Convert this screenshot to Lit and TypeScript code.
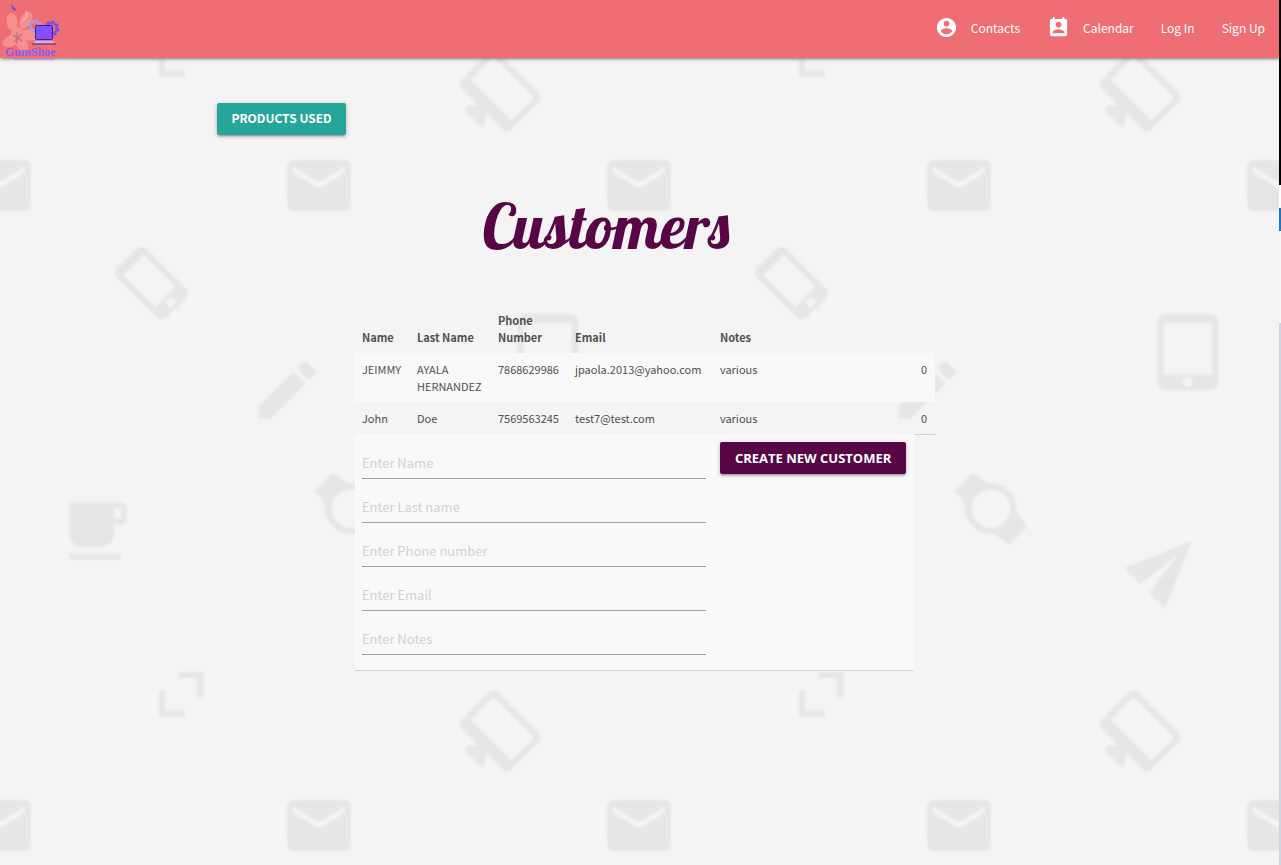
import { LitElement, html, css, svg, unsafeCSS } from "lit";
import { customElement } from "lit/decorators.js";

const mail =
  "M20 4H4c-1.1 0-1.99.9-1.99 2L2 18c0 1.1.9 2 2 2h16c1.1 0 2-.9 2-2V6c0-1.1-.9-2-2-2zm0 4l-8 5-8-5V6l8 5 8-5v2z";
const phone =
  "M15.5 1h-8C6.12 1 5 2.12 5 3.5v17C5 21.88 6.12 23 7.5 23h8c1.38 0 2.5-1.12 2.5-2.5v-17C18 2.12 16.88 1 15.5 1zm-4 21c-.83 0-1.5-.67-1.5-1.5s.67-1.5 1.5-1.5 1.5.67 1.5 1.5-.67 1.5-1.5 1.5zm4.5-4H7V4h9v14z";
const pencil =
  "M3 17.25V21h3.75L17.81 9.94l-3.75-3.75L3 17.25zM20.71 7.04c.39-.39.39-1.02 0-1.41l-2.34-2.34c-.39-.39-1.02-.39-1.41 0l-1.83 1.83 3.75 3.75 1.83-1.83z";
const tablet =
  "M18.5 0h-14C3.12 0 2 1.12 2 2.5v19C2 22.88 3.12 24 4.5 24h14c1.38 0 2.5-1.12 2.5-2.5v-19C21 1.12 19.88 0 18.5 0zm-7 23c-.83 0-1.5-.67-1.5-1.5s.67-1.5 1.5-1.5 1.5.67 1.5 1.5-.67 1.5-1.5 1.5zm7.5-4H4V3h15v16z";
const cup =
  "M20 3H4v10c0 2.21 1.79 4 4 4h6c2.21 0 4-1.79 4-4v-3h2c1.11 0 2-.89 2-2V5c0-1.11-.89-2-2-2zm0 5h-2V5h2v3zM4 21h16v-2H4v2z";
const watch =
  "M20 12c0-2.54-1.19-4.81-3.04-6.27L16 0H8l-.95 5.73C5.19 7.19 4 9.45 4 12s1.19 4.81 3.05 6.27L8 24h8l.96-5.73C18.81 16.81 20 14.54 20 12zM6 12c0-3.31 2.69-6 6-6s6 2.69 6 6-2.69 6-6 6-6-2.69-6-6z";
const plane = "M2.01 21L23 12 2.01 3 2 10l15 2-15 2z";
const desktop =
  "M21 2H3c-1.1 0-2 .9-2 2v12c0 1.1.9 2 2 2h7l-2 3v1h8v-1l-2-3h7c1.1 0 2-.9 2-2V4c0-1.1-.9-2-2-2zm0 12H3V4h18v10z";
const corners = "M11 5h8v8h-2V7h-6zM5 11h2v6h6v2H5z";

// Each mark is a 24-unit glyph drawn at 3.2x around its centre.
const mark = (d: string, x: number, y: number, turn = 0) =>
  `<path transform="translate(${x} ${y}) rotate(${turn}) scale(3.2) translate(-12 -12)" d="${d}"/>`;

const tile = `<svg xmlns="http://www.w3.org/2000/svg" width="640" height="640"><filter id="s"><feGaussianBlur stdDeviation="0.8"/></filter><g fill="#e6e6e6" filter="url(#s)">${[
  mark(mail, 319, 185.6),
  mark(mail, 639, 185.6),
  mark(mail, -1, 185.6),
  mark(phone, 152.8, 282, -45),
  mark(pencil, 287.2, 390.2),
  mark(tablet, 549.4, 352),
  mark(cup, 95, 531),
  mark(watch, 351, 508.6, -45),
  mark(plane, 527, 566, -45),
  mark(desktop, 495.5, 95.5, 45),
  mark(corners, 181.3, 54.3),
].join("")}</g></svg>`;

const tileUrl = unsafeCSS(`url("data:image/svg+xml,${encodeURIComponent(tile)}")`);

const customers = [
  ["JEIMMY", "AYALA HERNANDEZ", "7868629986", "jpaola.2013@yahoo.com", "various", "0"],
  ["John", "Doe", "7569563245", "test7@test.com", "various", "0"],
];

const fields = [
  { name: "name", label: "Enter Name", type: "text" },
  { name: "lastName", label: "Enter Last name", type: "text" },
  { name: "phone", label: "Enter Phone number", type: "tel" },
  { name: "email", label: "Enter Email", type: "email" },
  { name: "notes", label: "Enter Notes", type: "text" },
];

const petal = (cx: number, cy: number, turn: number) =>
  svg`<ellipse cx=${cx} cy=${cy} rx="5.5" ry="9" transform="rotate(${turn} ${cx} ${cy})" fill="#f68f90"/>`;

@customElement("app-root")
export class AppRoot extends LitElement {
  static styles = css`
    :host {
      display: flex;
      min-height: 100vh;
      font-family: "Noto Sans CJK SC", "Noto Sans", sans-serif;
      font-size: 11px;
      line-height: 17px;
      color: #505050;
    }
    .page {
      flex: 1;
      min-width: 0;
      background: #f4f4f4 ${tileUrl};
    }
    .edge {
      flex: none;
      width: 2px;
      background: linear-gradient(
        #000 185px, #fff 185px, #fff 208px, #1c78c4 208px, #1c78c4 231px,
        #f5f7f9 231px, #f5f7f9 323px, #cbd5e5 323px
      );
    }
    .bar {
      display: flex;
      justify-content: space-between;
      height: 58px;
      background: #ee6e73;
      box-shadow: 0 2px 2px 0 rgba(0, 0, 0, 0.14), 0 3px 1px -2px rgba(0, 0, 0, 0.12),
        0 1px 5px 0 rgba(0, 0, 0, 0.2);
    }
    .logo {
      display: block;
      width: 64px;
      height: 62px;
    }
    .wordmark {
      font: bold 12px "Liberation Serif", serif;
      fill: #8a5cf0;
    }
    .links {
      display: flex;
      align-items: center;
      gap: 27px;
      margin: 0;
      padding: 0 14px 4px 0;
      list-style: none;
    }
    .link {
      display: flex;
      align-items: center;
      gap: 13px;
      color: #fff;
      font-size: 12px;
      text-decoration: none;
    }
    .icon {
      width: 23px;
      height: 23px;
      fill: #fff;
    }
    .actions {
      padding: 45px 17% 0;
    }
    .btn {
      height: 32px;
      padding: 0 14px 2px;
      border: 0;
      border-radius: 2px;
      color: #fff;
      background: #26a69a;
      font: bold 12px/30px "Noto Sans CJK SC", "Noto Sans", sans-serif;
      text-transform: uppercase;
      white-space: nowrap;
      cursor: pointer;
      box-shadow: 0 2px 2px 0 rgba(0, 0, 0, 0.14), 0 3px 1px -2px rgba(0, 0, 0, 0.12),
        0 1px 5px 0 rgba(0, 0, 0, 0.2);
    }
    .btn.create {
      padding: 0 15px;
      background: #570544;
      font: bold 13px/32px "Open Sans", sans-serif;
    }
    .content {
      padding: 0 33% 24px 27.75%;
    }
    .title {
      margin: 55px 0 42px;
      font: 63px/72px Lobster, "Liberation Serif", serif;
      text-align: center;
      color: #570544;
    }
    .list {
      width: 580px;
      table-layout: fixed;
      border-collapse: collapse;
    }
    .c1 { width: 55px; }
    .c2 { width: 81px; }
    .c3 { width: 77px; }
    .c4 { width: 145px; }
    .c5 { width: 201px; }
    .c6 { width: 21px; }
    th,
    td {
      padding: 8px 7px 7px;
      text-align: left;
      vertical-align: top;
    }
    th {
      vertical-align: bottom;
    }
    tbody tr:nth-child(odd) td {
      background: #f9f9f9;
    }
    tbody tr:nth-child(2) td:last-child,
    tbody tr:last-child td {
      box-shadow: 0 1px #d3d3d3;
    }
    .form {
      display: grid;
      gap: 13px;
      padding: 6px 0 8px;
    }
    .field {
      width: 100%;
      height: 31px;
      box-sizing: border-box;
      padding: 0 0 1px;
      border: 0;
      border-bottom: 1px solid #9e9e9e;
      border-radius: 0;
      outline: 0;
      background: transparent;
      color: #505050;
      font: 13px "Noto Sans CJK SC", "Noto Sans", sans-serif;
    }
    .field::placeholder {
      color: #d1d1d1;
      opacity: 1;
    }
  `;

  private logo() {
    return svg`
      <svg class="logo" viewBox="0 0 64 62" role="img" aria-label="GumShoe">
        <g>
          ${petal(12, 22, -8)}${petal(26, 20, 28)}${petal(11, 41, 68)}
          ${petal(29, 35, 100)}${petal(22, 44, 150)}
        </g>
        <circle cx="18" cy="34" r="7" fill="#f68f90" />
        <path d="M17 32v12M13 35l9 6M22 34l-8 8" stroke="#c87580" stroke-width="1.6" fill="none" />
        <path d="M26 11q3 5-3 9" stroke="#fbc3bf" stroke-width="1.2" fill="none" />
        <path d="M11 4l5 5-1 2-3-2z" fill="#8348cf" />
        <circle cx="35" cy="26" r="4.5" fill="none" stroke="#b493dc" stroke-width="2.4" />
        <circle cx="35" cy="26" r="6" fill="none" stroke="#b493dc" stroke-width="1.6" stroke-dasharray="2.4 2.3" />
        <circle cx="51.5" cy="28.5" r="5.5" fill="none" stroke="#7c4df0" stroke-width="2.6" />
        <circle cx="51.5" cy="28.5" r="7.2" fill="none" stroke="#7c4df0" stroke-width="1.8" stroke-dasharray="2.9 2.75" />
        <rect x="35.5" y="25.5" width="17" height="14" rx="1" fill="#8450ff" stroke="#40208a" />
        <path d="M35 41h18l2 2.5H33z" fill="#c9b4f5" />
        <path d="M32 44h24" stroke="#40208a" stroke-width="1" />
        <text class="wordmark" x="5" y="56">GumShoe</text>
        <path d="M14 59h40" stroke="#b284d8" stroke-width="1.4" stroke-dasharray="2 .6 4 .6 3 .8" />
      </svg>`;
  }

  render() {
    return html`
      <div class="page">
        <header>
          <nav class="bar">
            <a href="#home">${this.logo()}</a>
            <ul class="links">
              <li>
                <a class="link" href="#contacts">
                  <svg class="icon" viewBox="0 0 24 24" aria-hidden="true">
                    <path d="M12 2C6.48 2 2 6.48 2 12s4.48 10 10 10 10-4.48 10-10S17.52 2 12 2zm0 3c1.66 0 3 1.34 3 3s-1.34 3-3 3-3-1.34-3-3 1.34-3 3-3zm0 14.2c-2.5 0-4.71-1.28-6-3.22.03-1.99 4-3.08 6-3.08 1.99 0 5.97 1.09 6 3.08-1.29 1.94-3.5 3.22-6 3.22z" />
                  </svg>
                  Contacts
                </a>
              </li>
              <li>
                <a class="link" href="#calendar">
                  <svg class="icon" viewBox="0 0 24 24" aria-hidden="true">
                    <path d="M19 3h-1V1h-2v2H8V1H6v2H5c-1.11 0-2 .9-2 2v14c0 1.1.89 2 2 2h14c1.1 0 2-.9 2-2V5c0-1.1-.9-2-2-2zm-7 3c1.66 0 3 1.34 3 3s-1.34 3-3 3-3-1.34-3-3 1.34-3 3-3zm6 12H6v-1c0-2 4-3.1 6-3.1s6 1.1 6 3.1v1z" />
                  </svg>
                  Calendar
                </a>
              </li>
              <li><a class="link" href="#login">Log In</a></li>
              <li><a class="link" href="#signup">Sign Up</a></li>
            </ul>
          </nav>
        </header>
        <div class="actions"><button class="btn" type="button">Products used</button></div>
        <main class="content">
          <h1 class="title">Customers</h1>
          <table class="list">
            <colgroup>
              <col class="c1" /><col class="c2" /><col class="c3" />
              <col class="c4" /><col class="c5" /><col class="c6" />
            </colgroup>
            <thead>
              <tr>
                <th scope="col">Name</th>
                <th scope="col">Last Name</th>
                <th scope="col">Phone Number</th>
                <th scope="col">Email</th>
                <th scope="col">Notes</th>
              </tr>
            </thead>
            <tbody>
              ${customers.map((row) => html`<tr>${row.map((cell) => html`<td>${cell}</td>`)}</tr>`)}
              <tr>
                <td colspan="4">
                  <form class="form" id="new-customer">
                    ${fields.map(
                      (f) => html`<input
                        class="field"
                        type=${f.type}
                        name=${f.name}
                        placeholder=${f.label}
                        aria-label=${f.label}
                      />`
                    )}
                  </form>
                </td>
                <td><button class="btn create" type="submit" form="new-customer">Create new customer</button></td>
              </tr>
            </tbody>
          </table>
        </main>
      </div>
      <div class="edge"></div>
    `;
  }
}
